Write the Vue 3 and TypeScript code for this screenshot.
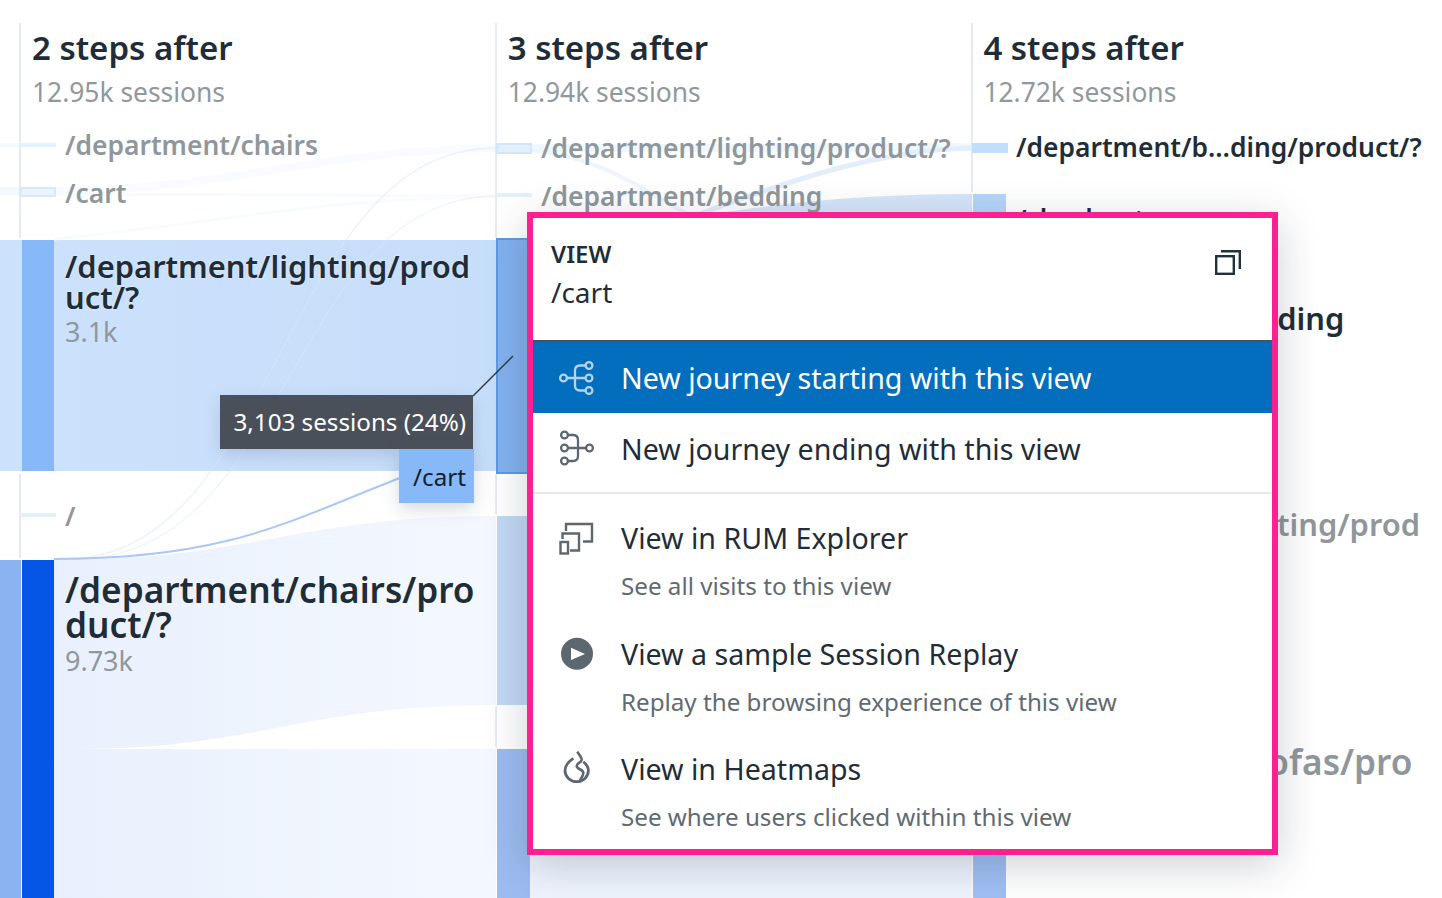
<template>
  <div class="journey">
    <!-- sankey flows, sits under everything else -->
    <svg class="flows" width="1442" height="898" viewBox="0 0 1442 898">
      <defs>
        <linearGradient id="lightFlow" x1="0" x2="1" y1="0" y2="0">
          <stop offset="0" stop-color="#cbe1fc" />
          <stop offset="1" stop-color="#c7defa" />
        </linearGradient>
        <linearGradient id="chairFlow" x1="0" x2="1" y1="0" y2="0">
          <stop offset="0" stop-color="#e9f0fd" />
          <stop offset="1" stop-color="#f4f8fe" />
        </linearGradient>
      </defs>
      <rect x="0" y="240" width="496" height="231" fill="url(#lightFlow)" />
      <path d="M54 560C250 560 300 516 496 516V705C300 705 260 749 75 749H496V898H54Z" fill="url(#chairFlow)" />
      <path d="M530 749H972V898H530Z" fill="#eef3fd" />
      <path d="M0 560H21V898H0Z" fill="#8bb3f1" />
      <path d="M0 145H20" fill="none" stroke="#f3f8fe" stroke-width="4" />
      <path d="M0 191H20" fill="none" stroke="#f3f8fe" stroke-width="8" />
      <path d="M56 191C220 191 320 150 496 148" fill="none" stroke="#f8fbff" stroke-width="8" />
      <path d="M56 194C220 194 320 196 496 196" fill="none" stroke="#f8fbff" stroke-width="3" />
      <path d="M54 239C200 226 300 200 496 196" fill="none" stroke="#f8fbff" stroke-width="3" />
      <path d="M64 559C280 559 280 148 496 148" fill="none" stroke="#dbe8fb" stroke-opacity="0.5" stroke-width="1.5" />
      <path d="M76 559C290 559 290 196 496 196" fill="none" stroke="#dbe8fb" stroke-opacity="0.4" stroke-width="1.5" />
      <path d="M530 148C700 148 800 148 972 147" fill="none" stroke="#f1f7fe" stroke-width="8" />
      <path d="M530 150C620 160 650 200 720 230" fill="none" stroke="#eef5fe" stroke-width="4" />
      <path d="M700 214C790 180 880 150 972 148" fill="none" stroke="#e3eefc" stroke-width="5" />
      <path d="M700 216C800 200 880 194 972 194V215H700Z" fill="#d5e6fa" />
      <path d="M54 559C230 559 290 520 400 478" fill="none" stroke="#a9c8f8" stroke-width="2" />
    </svg>

    <!-- column headers -->
    <div class="columns">
      <div v-for="col in columns" :key="col.title" class="column">
        <div class="col-title">{{ col.title }}</div>
        <div class="col-sub">{{ col.sessions }}</div>
      </div>
    </div>

    <!-- separators and node bars -->
    <i v-for="s in separators" :key="`${s.x}-${s.y}`" class="sep" :style="{ left: s.x + 'px', top: s.y + 'px', height: s.h + 'px' }"></i>
    <i
      v-for="b in bars"
      :key="`${b.x}-${b.y}`"
      class="bar"
      :style="{ left: b.x + 'px', top: b.y + 'px', width: b.w + 'px', height: b.h + 'px', background: b.color, borderColor: b.border || b.color }"
    ></i>

    <!-- node labels -->
    <div
      v-for="l in labels"
      :key="`${l.text}-${l.x}`"
      class="node-label"
      :class="[l.kind, { dim: l.dim }]"
      :style="{ left: l.x + 'px', top: l.y + 'px', width: l.w ? l.w + 'px' : undefined }"
    >
      <div class="node-name">{{ l.text }}</div>
      <div v-if="l.count" class="node-count">{{ l.count }}</div>
    </div>

    <!-- hover tooltip on the link -->
    <svg class="leader" width="60" height="60" viewBox="0 0 60 60">
      <path d="M3 55L43 15" stroke="#2f3842" stroke-width="1.5" fill="none" />
    </svg>
    <div class="tooltip">3,103 sessions (24%)</div>
    <div class="chip">/cart</div>

    <!-- context menu -->
    <div class="menu">
      <div class="menu-head">
        <div>
          <div class="menu-kicker">VIEW</div>
          <div class="menu-view">/cart</div>
        </div>
        <svg class="copy" width="28" height="28" viewBox="0 0 28 28" fill="none" stroke="#22313c" stroke-width="2.4">
          <rect x="2.2" y="8.2" width="17.6" height="17.6" />
          <path d="M7 3.2H25.8V21" />
        </svg>
      </div>

      <div class="row row-active">
        <svg class="ico" width="36" height="36" viewBox="0 0 36 36" fill="none" stroke="#b4d3ee" stroke-width="2.3">
          <circle cx="4.500" cy="18" r="3.400" />
          <circle cx="30" cy="5.500" r="3.400" />
          <circle cx="30" cy="18" r="3.400" />
          <circle cx="30" cy="30.500" r="3.400" />
          <path d="M8 18H26.500M26.500 5.500H21Q16 5.500 16 10.500V25.500Q16 30.500 21 30.500H26.500" />
        </svg>
        <span>New journey starting with this view</span>
      </div>
      <div class="row row-end">
        <svg class="ico" width="36" height="36" viewBox="0 0 36 36" fill="none" stroke="#5c6770" stroke-width="2.3">
          <circle cx="5.500" cy="5" r="3.400" />
          <circle cx="5.500" cy="18" r="3.400" />
          <circle cx="5.500" cy="31" r="3.400" />
          <circle cx="30.500" cy="18" r="3.400" />
          <path d="M9 18H27M9 5H14Q19 5 19 10V26Q19 31 14 31H9" />
        </svg>
        <span>New journey ending with this view</span>
      </div>

      <div class="divider"></div>

      <div v-for="item in links" :key="item.title" class="link">
        <svg class="ico" width="36" height="36" viewBox="0 0 36 36" fill="none" stroke="#5c6770" stroke-width="2.400">
          <template v-if="item.icon === 'rum'">
            <path d="M7 12V5H33V22.500H24" />
            <path d="M3.500 20V14.500H20V31.500H11" />
            <rect x="1.500" y="23" width="7.500" height="11.500" />
          </template>
          <template v-else-if="item.icon === 'play'">
            <circle cx="18" cy="18.800" r="16" fill="#5c6770" stroke="none" />
            <path d="M12 12.800V25L26 18.900Z" fill="#fff" stroke="none" />
          </template>
          <template v-else>
            <path d="M14.300 8.300C9 12 6 16 6 20.500A11.700 11.200 0 0 0 29.400 20.500C29.400 17 27 14 24.300 11.700" stroke-width="2.800" />
            <path d="M18.300 1.700C20 5 23 7 22.700 10C22 13 17.700 13 17.700 16C17.700 19.500 24.300 19 24.300 23C24.300 26 22 28 21 30" stroke-width="2.600" />
          </template>
        </svg>
        <div class="link-text">
          <div class="link-title">{{ item.title }}</div>
          <div class="link-sub">{{ item.sub }}</div>
        </div>
      </div>
    </div>
  </div>
</template>

<script setup lang="ts">
interface Bar {
  x: number
  y: number
  w: number
  h: number
  color: string
  border?: string
}

interface Label {
  text: string
  x: number
  y: number
  kind: string
  w?: number
  count?: string
  dim?: boolean
}

const columns = [
  { title: '2 steps after', sessions: '12.95k sessions' },
  { title: '3 steps after', sessions: '12.94k sessions' },
  { title: '4 steps after', sessions: '12.72k sessions' },
]

const separators = [
  { x: 19, y: 23, h: 215 },
  { x: 19, y: 474, h: 84 },
  { x: 495, y: 23, h: 215 },
  { x: 495, y: 474, h: 40 },
  { x: 495, y: 707, h: 40 },
  { x: 971, y: 23, h: 169 },
]

const bars: Bar[] = [
  { x: 20, y: 143, w: 36, h: 4, color: '#e3f0fd' },
  { x: 20, y: 187, w: 36, h: 10, color: '#eaf3fe', border: '#d8e8fb' },
  { x: 22, y: 240, w: 32, h: 231, color: '#87b8f7' },
  { x: 20, y: 513, w: 36, h: 4, color: '#e3f0fd' },
  { x: 22, y: 560, w: 32, h: 338, color: '#0556e6' },
  { x: 496, y: 143, w: 36, h: 11, color: '#e4effc', border: '#d3e5fa' },
  { x: 496, y: 193, w: 36, h: 4, color: '#e3f0fd' },
  { x: 496, y: 238, w: 34, h: 236, color: '#82b1ee', border: '#5b9ae6' },
  { x: 497, y: 516, w: 33, h: 189, color: '#c1d9f6' },
  { x: 497, y: 749, w: 33, h: 149, color: '#9cbbf0' },
  { x: 972, y: 143, w: 36, h: 10, color: '#bfdffd' },
  { x: 973, y: 194, w: 33, h: 24, color: '#b5d6f8' },
  { x: 973, y: 855, w: 33, h: 43, color: '#a0bff3' },
]

const labels: Label[] = [
  { text: '/department/chairs', x: 65, y: 126, kind: 'sm', dim: true },
  { text: '/cart', x: 65, y: 174, kind: 'sm', dim: true },
  { text: '/department/lighting/product/?', x: 65, y: 251, kind: 'md', w: 410, count: '3.1k' },
  { text: '/', x: 65, y: 497, kind: 'sm', dim: true },
  { text: '/department/chairs/product/?', x: 65, y: 572, kind: 'lg', w: 412, count: '9.73k' },
  { text: '/department/lighting/product/?', x: 541, y: 129, kind: 'sm', dim: true },
  { text: '/department/bedding', x: 541, y: 177, kind: 'sm', dim: true },
  { text: '/department/b…ding/product/?', x: 1016, y: 128, kind: 'sm' },
  { text: '/checkout', x: 1016, y: 200, kind: 'sm' },
  { text: '/department/bedding', x: 1015, y: 303, kind: 'md' },
  { text: '/department/lighting/prod', x: 1015, y: 509, kind: 'md', dim: true },
  { text: '/department/sofas/pro', x: 1016, y: 744, kind: 'lg', dim: true },
]

const links = [
  { icon: 'rum', title: 'View in RUM Explorer', sub: 'See all visits to this view' },
  { icon: 'play', title: 'View a sample Session Replay', sub: 'Replay the browsing experience of this view' },
  { icon: 'flame', title: 'View in Heatmaps', sub: 'See where users clicked within this view' },
]
</script>

<style>
html,
body {
  background: #fff;
  overflow: hidden;
}
</style>

<style scoped>
.journey {
  position: relative;
  width: 1442px;
  height: 898px;
  overflow: hidden;
  background: #fff;
  font-family: "Noto Sans", "Open Sans", sans-serif;
  color: #1f2d38;
}

.flows {
  position: absolute;
  left: 0;
  top: 0;
}

.columns {
  position: relative;
  display: grid;
  grid-template-columns: repeat(3, 475.700px);
  padding: 26px 0 0 32px;
}

.col-title {
  font-size: 33px;
  line-height: 44px;
  font-weight: 600;
  color: #1f2d38;
}

.col-sub {
  font-size: 26.400px;
  line-height: 44px;
  color: #90989e;
}

.sep {
  position: absolute;
  width: 2px;
  background: #e6ebf3;
}

.bar {
  position: absolute;
  box-sizing: border-box;
  border: 2px solid;
}

.node-label {
  position: absolute;
  white-space: nowrap;
}

.node-name {
  font-weight: 600;
  color: #1f2d38;
}

.node-label.sm .node-name {
  font-size: 26.400px;
  line-height: 38px;
}

.node-label.md .node-name {
  font-size: 30.900px;
  line-height: 31px;
  text-shadow: 0 0 2px rgba(255, 255, 255, 0.8);
}

.node-label.lg .node-name {
  font-size: 35.200px;
  line-height: 35px;
  text-shadow: 0 0 2px rgba(255, 255, 255, 0.8);
}

.node-label[style*="width"] .node-name {
  white-space: normal;
  word-break: break-all;
}

.node-label.dim .node-name {
  color: #8f979c;
}

.node-count {
  margin-top: 1px;
  font-size: 27px;
  line-height: 36px;
  color: #8f979c;
}

.leader {
  position: absolute;
  left: 470px;
  top: 341px;
}

.tooltip {
  position: absolute;
  left: 220px;
  top: 395px;
  width: 253px;
  height: 54px;
  box-sizing: border-box;
  padding-right: 7px;
  text-align: right;
  background: #495059;
  color: #fff;
  font-size: 24.200px;
  line-height: 54px;
  white-space: nowrap;
  box-shadow: 0 6px 18px rgba(60, 80, 110, 0.2);
}

.chip {
  position: absolute;
  left: 399px;
  top: 449px;
  width: 75px;
  height: 54px;
  box-sizing: border-box;
  padding-right: 8px;
  text-align: right;
  background: #87b8f7;
  color: #14202a;
  font-size: 24.200px;
  line-height: 56px;
  box-shadow: 0 6px 18px rgba(60, 80, 110, 0.22);
}

.menu {
  position: absolute;
  left: 527px;
  top: 212px;
  width: 751px;
  height: 643px;
  box-sizing: border-box;
  border: 6px solid #fd2090;
  background: #fff;
  box-shadow: 0 10px 40px rgba(30, 40, 60, 0.22);
}

.menu-head {
  display: flex;
  justify-content: space-between;
  align-items: flex-start;
  box-sizing: border-box;
  height: 124px;
  padding: 20px 30px 0 18px;
  border-bottom: 2px solid #4a4f5c;
}

.menu-kicker {
  font-size: 24px;
  line-height: 32px;
  font-weight: 600;
}

.menu-view {
  margin-top: 2px;
  font-size: 28px;
  line-height: 40px;
}

.copy {
  margin-top: 10px;
}

.row {
  display: flex;
  align-items: center;
  gap: 26px;
  height: 72px;
  padding-left: 26px;
  font-size: 28.600px;
}

.row-active {
  height: 71px;
  background: #036ebd;
  color: #fff;
}

.row-end {
  height: 70px;
}

.divider {
  height: 2px;
  margin-top: 9px;
  background: #e6e9ee;
}

.link {
  display: flex;
  align-items: flex-start;
  gap: 26px;
  height: 115.500px;
  padding: 24px 0 0 26px;
  box-sizing: border-box;
}

.link-title {
  font-size: 28.600px;
  line-height: 40px;
}

.link-sub {
  margin-top: 8px;
  font-size: 24.200px;
  line-height: 40px;
  color: #5f6a73;
}

.ico {
  flex: none;
  margin-top: 1px;
}

.row .ico {
  margin-top: 0;
}
</style>
